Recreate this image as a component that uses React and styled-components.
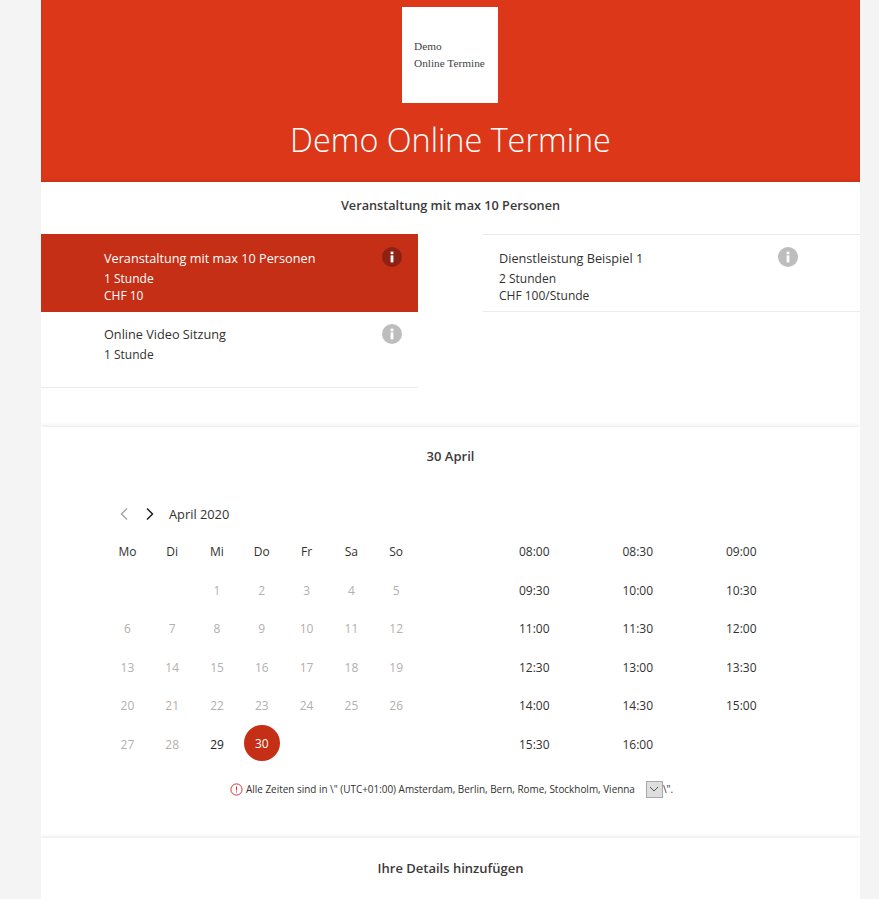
import React from "react";
import styled, { createGlobalStyle } from "styled-components";

const GlobalStyle = createGlobalStyle`
  html, body {
    margin: 0;
    padding: 0;
    height: 899px;
    overflow: hidden;
    background-color: #f4f4f4;
    font-family: "Open Sans", "Noto Sans", sans-serif;
    color: #323130;
  }
`;

const services = [
  [
    { name: "Veranstaltung mit max 10 Personen", lines: ["1 Stunde", "CHF 10"], selected: true },
    { name: "Online Video Sitzung", lines: ["1 Stunde"], tall: true },
  ],
  [{ name: "Dienstleistung Beispiel 1", lines: ["2 Stunden", "CHF 100/Stunde"], bordered: true }],
];

const weekDays = ["Mo", "Di", "Mi", "Do", "Fr", "Sa", "So"];
const times = [
  "08:00", "08:30", "09:00",
  "09:30", "10:00", "10:30",
  "11:00", "11:30", "12:00",
  "12:30", "13:00", "13:30",
  "14:00", "14:30", "15:00",
  "15:30", "16:00",
];

const InfoIcon = ({ dark }) => (
  <InfoSvg viewBox="0 0 20 20">
    <circle cx="10" cy="10" r="10" fill={dark ? "#8e2113" : "#bdbdbd"} />
    <rect x="8.6" y="4.6" width="2.8" height="2.6" fill="#fff" />
    <rect x="8.6" y="8.4" width="2.8" height="7" fill="#fff" />
  </InfoSvg>
);

const Chevron = ({ left, color }) => (
  <ChevronSvg viewBox="0 0 10 14">
    <path
      d={left ? "M8 1.5 L2.5 7 L8 12.5" : "M2 1.5 L7.5 7 L2 12.5"}
      fill="none"
      stroke={color}
      strokeWidth="1.5"
    />
  </ChevronSvg>
);

export default function App() {
  const days = [null, null];
  for (let d = 1; d <= 30; d++) days.push(d);

  return (
    <>
      <GlobalStyle />
      <Card>
        <Header>
          <Logo>
            <LogoLine>Demo</LogoLine>
            <LogoLine>Online Termine</LogoLine>
          </Logo>
          <Title>Demo Online Termine</Title>
        </Header>

        <ServiceSection>
          <ServiceTitle>Veranstaltung mit max 10 Personen</ServiceTitle>
          <ServiceColumns>
            {services.map((column, c) => (
              <ServiceColumn key={c} $right={c === 1}>
                {column.map((item) => (
                  <ServiceItem
                    key={item.name}
                    $right={c === 1}
                    $selected={item.selected}
                    $tall={item.tall}
                    $bordered={item.bordered}
                  >
                    <ServiceText $lift={item.tall}>
                      <ServiceName>{item.name}</ServiceName>
                      {item.lines.map((line) => (
                        <ServiceLine key={line}>{line}</ServiceLine>
                      ))}
                    </ServiceText>
                    <InfoIcon dark={item.selected} />
                  </ServiceItem>
                ))}
              </ServiceColumn>
            ))}
          </ServiceColumns>
        </ServiceSection>

        <DateSection>
          <SectionTitle>30 April</SectionTitle>
          <Booking>
            <CalendarPane>
              <MonthBar>
                <NavButton><Chevron left color="#a6a6a6" /></NavButton>
                <NavButton><Chevron color="#201f1e" /></NavButton>
                <MonthLabel>April 2020</MonthLabel>
              </MonthBar>
              <DayGrid>
                {weekDays.map((d) => (
                  <WeekDay key={d}>{d}</WeekDay>
                ))}
                {days.map((d, i) => (
                  <DayCell key={i}>
                    {d === 30 ? (
                      <ActiveDay>{d}</ActiveDay>
                    ) : (
                      <DayNumber $open={d === 29}>{d}</DayNumber>
                    )}
                  </DayCell>
                ))}
              </DayGrid>
            </CalendarPane>
            <TimeGrid>
              {times.map((t) => (
                <TimeSlot key={t}>{t}</TimeSlot>
              ))}
            </TimeGrid>
          </Booking>
          <ZoneNote>
            <ZoneIcon viewBox="0 0 13 13">
              <circle cx="6.5" cy="6.5" r="5.6" fill="none" stroke="#d13438" strokeWidth="1" />
              <rect x="6" y="3.4" width="1" height="4" fill="#d13438" />
              <rect x="6" y="8.4" width="1" height="1.1" fill="#d13438" />
            </ZoneIcon>
            <ZoneText>Alle Zeiten sind in \" (UTC+01:00) Amsterdam, Berlin, Bern, Rome, Stockholm, Vienna</ZoneText>
            <ZoneSelect>
              <svg width="10" height="6" viewBox="0 0 10 6">
                <path d="M1 1 L5 5 L9 1" fill="none" stroke="#555" strokeWidth="1" />
              </svg>
            </ZoneSelect>
            <ZoneText>\".</ZoneText>
          </ZoneNote>
        </DateSection>

        <DetailsSection>
          <SectionTitle>Ihre Details hinzufügen</SectionTitle>
        </DetailsSection>
      </Card>
    </>
  );
}

const Card = styled.div`
  width: 819px;
  height: 899px;
  margin-left: 41px;
  background-color: #ffffff;
  overflow: hidden;
`;
const Header = styled.div`
  height: 182px;
  display: flex;
  flex-direction: column;
  align-items: center;
  padding: 7px 1px 0 0;
  box-sizing: border-box;
  background-color: #dd371a;
  box-shadow: inset 0 -2px 2px rgba(0, 0, 0, 0.08);
`;
const Logo = styled.div`
  width: 96px;
  height: 96px;
  display: flex;
  flex-direction: column;
  justify-content: center;
  gap: 4px;
  padding-left: 12px;
  box-sizing: border-box;
  background-color: #ffffff;
`;
const LogoLine = styled.div`
  color: #444444;
  font-family: "Liberation Serif", serif;
  font-size: 11.3px;
  line-height: 13px;
  white-space: nowrap;
`;
const Title = styled.h1`
  margin: 16px 0 0 1px;
  color: #ffffff;
  font-size: 32.4px;
  font-weight: 300;
  line-height: 40px;
`;
const ServiceSection = styled.div`
  height: 245px;
`;
const SectionTitle = styled.div`
  height: 58px;
  display: flex;
  align-items: center;
  justify-content: center;
  color: #3b3a39;
  font-size: 13px;
  font-weight: 600;
`;
const ServiceTitle = styled(SectionTitle)`
  height: 46px;
  margin-bottom: 6px;
  font-size: 12.7px;
`;
const ServiceColumns = styled.div`
  display: grid;
  grid-template-columns: 377px 377px;
  justify-content: space-between;
`;
const ServiceColumn = styled.div`
  display: flex;
  flex-direction: column;
  border-top: ${(p) => (p.$right ? "1px solid #eaeaea" : "none")};
`;
const ServiceItem = styled.div`
  height: ${(p) => (p.$tall ? 76 : p.$bordered ? 77 : 78)}px;
  display: flex;
  justify-content: space-between;
  align-items: flex-start;
  box-sizing: border-box;
  padding: ${(p) => (p.$right ? "12px 62px 0 16px" : p.$tall ? "12px 16px 0 63px" : "13px 16px 0 63px")};
  color: ${(p) => (p.$selected ? "#ffffff" : "#323130")};
  background-color: ${(p) => (p.$selected ? "#c42f16" : "#ffffff")};
  border-bottom: ${(p) => (p.$selected ? "none" : "1px solid #eaeaea")};
`;
const ServiceText = styled.div`
  display: flex;
  flex-direction: column;
  margin-top: ${(p) => (p.$lift ? "-1px" : "0")};
`;
const ServiceName = styled.div`
  font-size: 12.7px;
  line-height: 22px;
  margin-bottom: 1px;
`;
const ServiceLine = styled.div`
  font-size: 12px;
  line-height: 17px;
`;
const InfoSvg = styled.svg`
  width: 20px;
  height: 20px;
  flex-shrink: 0;
`;
const DateSection = styled.div`
  height: 411px;
  background-color: #ffffff;
  box-shadow: 0 -1px 4px rgba(0, 0, 0, 0.1);
`;
const Booking = styled.div`
  display: flex;
  margin-top: 14px;
  padding-left: 64px;
`;
const CalendarPane = styled.div`
  width: 314px;
`;
const MonthBar = styled.div`
  height: 30px;
  display: flex;
  align-items: center;
  padding-left: 14px;
`;
const NavButton = styled.div`
  width: 26px;
  display: flex;
`;
const ChevronSvg = styled.svg`
  width: 10px;
  height: 14px;
`;
const MonthLabel = styled.div`
  margin-left: -2px;
  font-size: 12.8px;
`;
const DayGrid = styled.div`
  display: grid;
  grid-template-columns: repeat(7, 44.8px);
  grid-template-rows: 39.4px;
  grid-auto-rows: 38.4px;
  margin-top: 3px;
`;
const WeekDay = styled.div`
  display: flex;
  align-items: center;
  justify-content: center;
  font-size: 12px;
`;
const DayCell = styled.div`
  display: flex;
  align-items: center;
  justify-content: center;
`;
const DayNumber = styled.span`
  font-size: 12px;
  color: ${(p) => (p.$open ? "#201f1e" : "#b3b0ad")};
`;
const ActiveDay = styled.div`
  width: 36px;
  height: 36px;
  margin-bottom: 2px;
  border-radius: 50%;
  display: flex;
  align-items: center;
  justify-content: center;
  color: #ffffff;
  font-size: 12px;
  background-color: #c42f16;
`;
const TimeGrid = styled.div`
  display: grid;
  grid-template-columns: repeat(3, 103.5px);
  grid-template-rows: 39.4px;
  grid-auto-rows: 38.4px;
  margin-top: 33px;
  margin-left: 63.5px;
  align-self: flex-start;
`;
const TimeSlot = styled.div`
  display: flex;
  align-items: center;
  justify-content: center;
  font-size: 12px;
`;
const ZoneNote = styled.div`
  display: flex;
  align-items: center;
  height: 18px;
  margin-top: 17px;
  padding-left: 189px;
`;
const ZoneIcon = styled.svg`
  width: 13px;
  height: 13px;
  margin-right: 3px;
`;
const ZoneText = styled.span`
  font-size: 9.93px;
  white-space: nowrap;
`;
const ZoneSelect = styled.div`
  width: 17px;
  height: 17px;
  display: flex;
  align-items: center;
  justify-content: center;
  box-sizing: border-box;
  margin-left: 11px;
  border: 1px solid #a8a8a8;
  background-color: #dedede;
`;
const DetailsSection = styled.div`
  height: 61px;
  padding-top: 1px;
  background-color: #ffffff;
  box-shadow: 0 -1px 4px rgba(0, 0, 0, 0.1);
`;
